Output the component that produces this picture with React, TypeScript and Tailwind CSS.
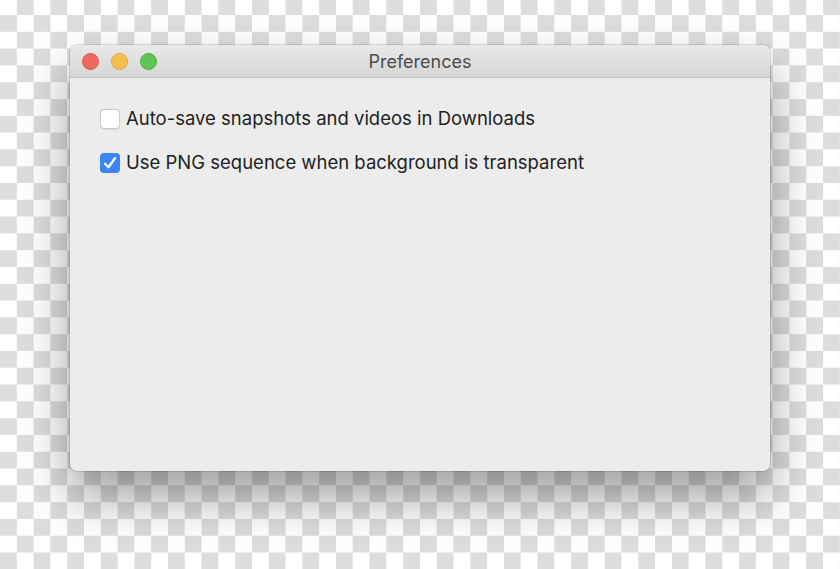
import React from 'react';

const Checkbox = ({ checked }: { checked: boolean }) =>
  checked ? (
    <span className="flex h-[20px] w-[20px] flex-shrink-0 items-center justify-center rounded-[4px] bg-[#3d85f7]">
      <svg viewBox="0 0 20 20" className="h-[20px] w-[20px]" fill="none">
        <path d="M5 10.8 L8.4 14.3 L15 5.2" stroke="#fff" strokeWidth="2.3" strokeLinecap="round" strokeLinejoin="round" />
      </svg>
    </span>
  ) : (
    <span className="h-[20px] w-[20px] flex-shrink-0 rounded-[4px] border border-[#c9c9c9] bg-white shadow-[0_0.5px_1px_rgba(0,0,0,0.08)]" />
  );

export default function App() {
  return (
    <div
      className="h-[569px] w-[840px] overflow-hidden pl-[70px] pt-[45px]"
      style={{
        backgroundColor: '#ffffff',
        backgroundImage: 'conic-gradient(#dddddd 25%, #ffffff 0 50%, #dddddd 0 75%, #ffffff 0)',
        backgroundSize: '33.6px 33.6px',
        backgroundPosition: '0 -1.8px',
      }}
    >
      <div className="flex h-[426px] w-[700px] flex-col overflow-hidden rounded-[7px] bg-[#ececec] shadow-[0_26px_50px_rgba(0,0,0,0.38),0_0_0_1px_rgba(0,0,0,0.12)]">
        {/* Title bar */}
        <div className="relative flex h-[33px] flex-shrink-0 items-center border-b border-[#c4c4c4] bg-gradient-to-b from-[#e9e9e9] to-[#d6d6d6] px-[12px]">
          <div className="flex gap-[12px]">
            <span className="h-[17px] w-[17px] rounded-full bg-[#ec6a5e] border border-[#d9574c]" />
            <span className="h-[17px] w-[17px] rounded-full bg-[#f4bf4f] border border-[#dea73b]" />
            <span className="h-[17px] w-[17px] rounded-full bg-[#61c554] border border-[#4fae43]" />
          </div>
          <div className="absolute inset-0 flex items-center justify-center font-['Inter',sans-serif] text-[18px] text-[#4c4c4c]">
            Preferences
          </div>
        </div>

        {/* Content */}
        <div className="flex flex-col gap-[17px] pl-[30px] pt-[27px] font-['Inter',sans-serif] text-[18.5px] leading-[27px] text-[#222222]">
          <label className="flex items-center gap-[6px]">
            <Checkbox checked={false} />
            <span>Auto-save snapshots and videos in Downloads</span>
          </label>
          <label className="flex items-center gap-[6px]">
            <Checkbox checked={true} />
            <span>Use PNG sequence when background is transparent</span>
          </label>
        </div>
      </div>
    </div>
  );
}
